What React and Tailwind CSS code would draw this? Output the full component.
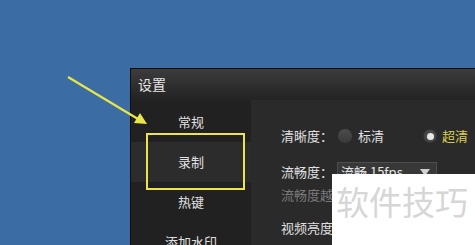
import React from "react";

const font = { fontFamily: '"Noto Sans CJK SC", "Liberation Sans", sans-serif' };

const sideItems = ["常规", "录制", "热键", "添加水印"];

const Radio = ({ checked }) =>
  checked ? (
    <span className="flex h-[14px] w-[14px] items-center justify-center rounded-full bg-[#4a4a4a] shadow-[inset_0_0_2px_#111]">
      <span className="h-[7px] w-[7px] rounded-full bg-[#e8e8e8]" />
    </span>
  ) : (
    <span className="h-[14px] w-[14px] rounded-full bg-gradient-to-b from-[#4c4c4c] to-[#3a3a3a]" />
  );

const App = () => {
  return (
    <div
      className="relative h-[245px] w-[475px] overflow-hidden bg-[#3b6ca4] pl-[130px] pt-[68px]"
      style={font}
    >
      {/* settings window */}
      <div className="flex w-[420px] flex-col border border-[#0e0e0e]">
        <div className="flex h-[31px] items-center bg-gradient-to-b from-[#3c3c3c] to-[#232323] pl-[7px] text-[14px] text-[#e6e6e6]">
          设置
        </div>
        <div className="flex h-[200px]">
          <div className="flex w-[120px] flex-col bg-[#212121] pt-[2px]">
            {sideItems.map((item, i) => (
              <div
                key={item}
                className={
                  "flex h-[40px] items-center justify-center text-[13px] text-[#e0e0e0] " +
                  (i === 1 ? "bg-[#2c2c2c]" : "")
                }
              >
                {item}
              </div>
            ))}
          </div>
          <div className="flex flex-1 flex-col bg-[#2a2a2a] pl-[30px] pt-[27px] text-[13px] text-[#e0e0e0]">
            <div className="flex h-[18px] items-center">
              <span className="w-[57px]">清晰度：</span>
              <Radio />
              <span className="ml-[6px] w-[65px]">标清</span>
              <Radio checked />
              <span className="ml-[5px] text-[#d9cf4e]">超清</span>
            </div>
            <div className="mt-[17px] flex h-[20px] items-center">
              <span className="w-[56px]">流畅度：</span>
              <div className="flex h-[21px] w-[100px] items-center justify-between border border-[#4e4e4e] bg-[#383838] pl-[3px] pr-[6px] text-[#e6e6e6]">
                <span>流畅 15fps</span>
                <span className="h-0 w-0 border-x-[5px] border-t-[7px] border-x-transparent border-t-[#d0d0d0]" />
              </div>
            </div>
            <div className="mt-[5px] flex h-[16px] items-center text-[#7a7a7a]">
              流畅度越高，画面越流畅
            </div>
            <div className="mt-[16px] flex h-[18px] items-center">视频亮度：</div>
          </div>
        </div>
      </div>

      {/* yellow highlight box */}
      <div className="absolute left-[146px] top-[133px] h-[57px] w-[99px] border-2 border-[#ede44c]" />

      {/* yellow arrow */}
      <svg className="absolute left-0 top-0" width="475" height="245">
        <line x1="68" y1="77" x2="138" y2="119" stroke="#e9e64a" strokeWidth="2.2" />
        <polygon points="147,124 134,123 140,113" fill="#e9e64a" />
      </svg>

      {/* watermark */}
      <div className="absolute left-[332px] top-[174px] flex h-[71px] w-[143px] items-start bg-white pl-[4px] pt-[9px] text-[33px] leading-[36px] text-[#d6d6d6]">
        软件技巧
      </div>
    </div>
  );
};

export default App;
